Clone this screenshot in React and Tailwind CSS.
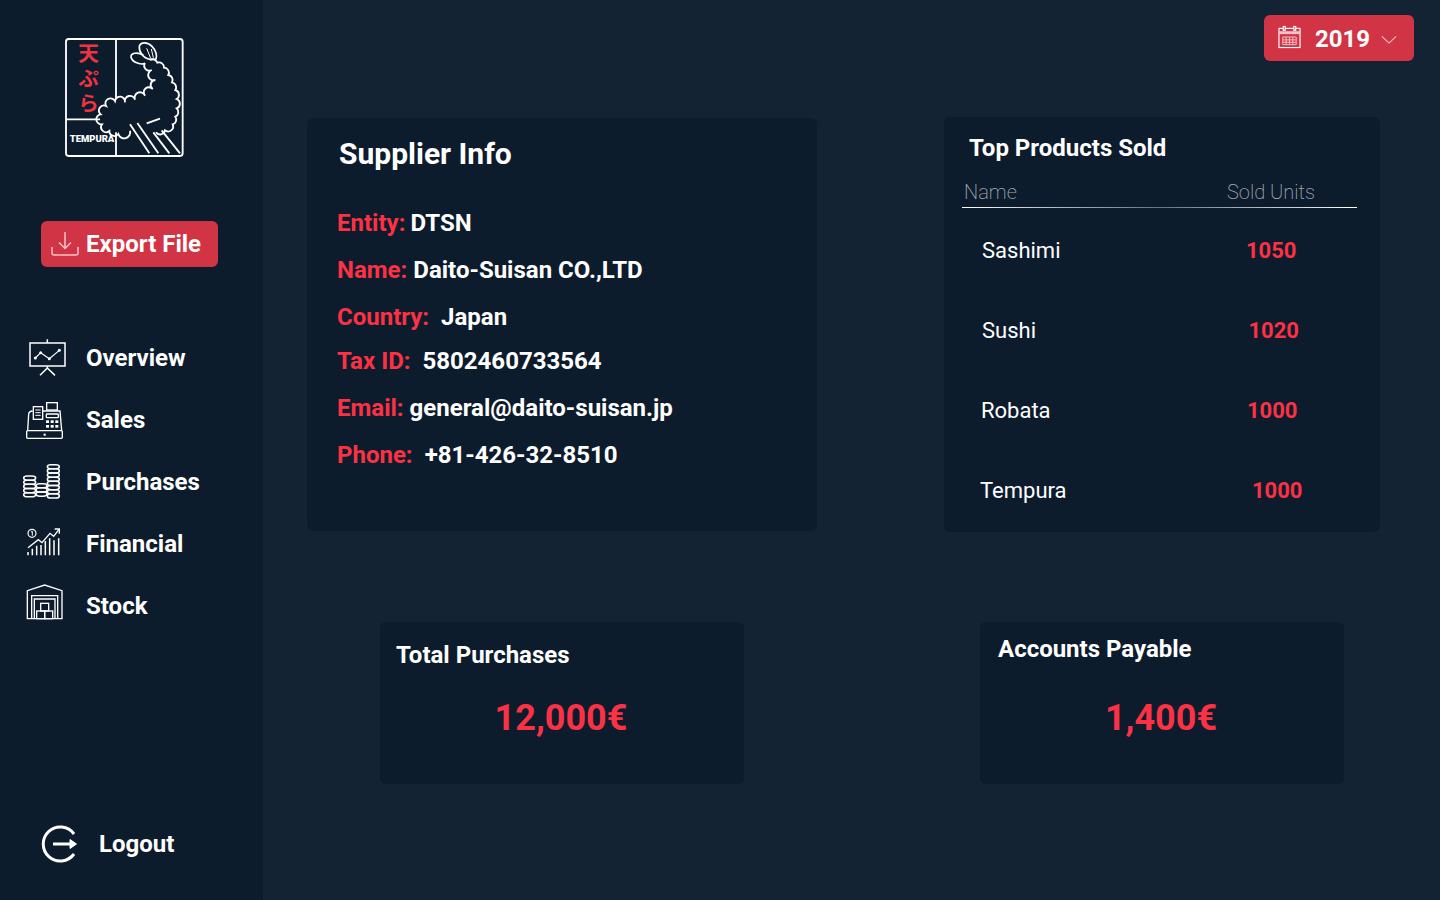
import React from 'react';

const scallop = (pts, r = 15) => {
  let d = `M${pts[0][0]} ${pts[0][1]}`;
  for (let i = 1; i < pts.length; i++) {
    d += ` A${r} ${r} 0 0 1 ${pts[i][0]} ${pts[i][1]}`;
  }
  return d;
};

const shrimpBack = [
  [300, 105], [322, 113], [342, 128], [355, 150], [366, 172], [376, 195], [380, 222],
  [380, 250], [376, 275], [368, 298], [345, 316], [318, 322],
];
const shrimpBelly = [
  [240, 317], [205, 327], [178, 318], [156, 298], [152, 268], [168, 243], [195, 228],
  [225, 232], [255, 224], [285, 212], [308, 192], [316, 165], [305, 135], [285, 114],
];

const Logo = () => (
  <svg viewBox="45 39 360 360" className="w-[120px] h-[120px]" fill="none">
    <rect x="48" y="42" width="350" height="351" rx="8" stroke="#fff" strokeWidth="5.5" />
    <path d="M198 42V222M198 322V393M48 283H150" stroke="#fff" strokeWidth="5.5" />
    <path d={scallop(shrimpBack)} stroke="#fff" strokeWidth="5.5" />
    <path d={scallop(shrimpBelly)} stroke="#fff" strokeWidth="5.5" />
    <path d="M300 103C280 100 266 80 268 64C272 50 292 50 306 64C318 76 322 92 318 102Z" stroke="#fff" strokeWidth="5" strokeLinejoin="round" />
    <path d="M284 116C266 120 246 110 243 96C242 84 262 80 280 90" stroke="#fff" strokeWidth="5" />
    <path d="M290 70L302 100M304 72L310 98" stroke="#fff" strokeWidth="3" />
    <path d="M290 295L330 281M240 298L298 385M262 294L325 385M310 322L358 385M335 316L390 385" stroke="#fff" strokeWidth="5.5" />
    <text
      x="116"
      y="52"
      fontSize="62"
      fontWeight="700"
      letterSpacing="14"
      fill="#ef3340"
      fontFamily="'Noto Sans CJK JP', sans-serif"
      style={{ writingMode: 'vertical-rl' }}
    >
      天ぷら
    </text>
    <text x="59" y="350" fontSize="26" fontWeight="900" fill="#fff" fontFamily="Roboto, sans-serif" textLength="134" lengthAdjust="spacingAndGlyphs">TEMPURA</text>
  </svg>
);

const OverviewIcon = () => (
  <svg viewBox="36 12 144 144" className="w-12 h-12" fill="none" stroke="#fff" strokeWidth="4.5">
    <rect x="60" y="39" width="105" height="69" />
    <path d="M112 28V39M112 108V114M90 136L112 114L135 136" />
    <path d="M76 84L92 68L118 86L148 61" strokeWidth="3.5" />
    <g fill="#fff" stroke="none">
      <circle cx="76" cy="84" r="4.5" />
      <circle cx="92" cy="68" r="4.5" />
      <circle cx="118" cy="86" r="4.5" />
      <circle cx="148" cy="61" r="4.5" />
    </g>
  </svg>
);

const SalesIcon = () => (
  <svg viewBox="36 198 144 144" className="w-12 h-12" fill="none" stroke="#fff" strokeWidth="4">
    <rect x="50" y="302" width="107" height="23" rx="3" />
    <path d="M53 302L56 252Q57 244 68 243M98 243H150L155 302" />
    <rect x="70" y="230" width="28" height="38" />
    <path d="M76 240H92M76 248H92M76 256H92" strokeWidth="3" />
    <rect x="110" y="218" width="32" height="22" />
    <rect x="109" y="252" width="36" height="11" rx="2" />
    <g fill="#fff" stroke="none">
      <rect x="108" y="271" width="9" height="8" />
      <rect x="122" y="271" width="9" height="8" />
      <rect x="136" y="271" width="9" height="8" />
      <rect x="108" y="285" width="9" height="8" />
      <rect x="122" y="285" width="9" height="8" />
      <rect x="136" y="285" width="9" height="8" />
      <circle cx="104" cy="314" r="3.5" />
    </g>
  </svg>
);

const coinRows = (x, w, top, count) =>
  Array.from({ length: count }, (_, i) => (
    <rect key={`${x}-${i}`} x={x} y={top + i * 12.5} width={w} height="12.5" rx="11" ry="6.25" />
  ));

const PurchasesIcon = () => (
  <svg viewBox="36 9 144 144" className="w-12 h-12" fill="none" stroke="#fff" strokeWidth="4.5">
    {coinRows(41, 36, 63, 5)}
    {coinRows(78, 33, 86, 3)}
    {coinRows(112, 36, 29, 8)}
  </svg>
);

const FinancialIcon = () => (
  <svg viewBox="36 195 144 144" className="w-12 h-12" fill="none" stroke="#fff" strokeWidth="4">
    <circle cx="66" cy="235" r="12" strokeWidth="3.5" />
    <path d="M63 231L67 229V242" strokeWidth="3" />
    <path d="M54 278L85 254L96 263L120 235L131 244L147 223" />
    <path d="M134 222H148V236" />
    <path d="M54 301V291M67 301V281M80 301V272M93 301V270M106 301V258M119 301V250M132 301V256M146 301V250" strokeWidth="4.5" />
  </svg>
);

const StockIcon = () => (
  <svg viewBox="36 381 144 144" className="w-12 h-12" fill="none" stroke="#fff" strokeWidth="4">
    <path d="M52 491V407L104 390L156 407V491Z" />
    <path d="M65 491V422H143V491M73 491V432H135V491" />
    <rect x="92" y="445" width="24" height="23" />
    <rect x="80" y="468" width="24" height="23" />
    <rect x="104" y="468" width="24" height="23" />
  </svg>
);

const navItems = [
  { label: 'Overview', icon: <OverviewIcon /> },
  { label: 'Sales', icon: <SalesIcon /> },
  { label: 'Purchases', icon: <PurchasesIcon /> },
  { label: 'Financial', icon: <FinancialIcon /> },
  { label: 'Stock', icon: <StockIcon /> },
];

const products = [
  { name: 'Sashimi', units: '1050', row: 'pl-[38px]', nameCol: 'w-[264px]' },
  { name: 'Sushi', units: '1020', row: 'pl-[38px]', nameCol: 'w-[266.5px]' },
  { name: 'Robata', units: '1000', row: 'pl-[37px]', nameCol: 'w-[266px]' },
  { name: 'Tempura', units: '1000', row: 'pl-[36px]', nameCol: 'w-[272px]' },
];

const supplier = [
  { label: 'Entity:', value: 'DTSN', row: 'mt-[37px]', gap: 'ml-[5px]' },
  { label: 'Name:', value: 'Daito-Suisan CO.,LTD', row: 'mt-[19px]', gap: 'ml-[6px]' },
  { label: 'Country:', value: 'Japan', row: 'mt-[19px]', gap: 'ml-[12px]' },
  { label: 'Tax ID:', value: '5802460733564', row: 'mt-[16px]', gap: 'ml-[12px]' },
  { label: 'Email:', value: 'general@daito-suisan.jp', row: 'mt-[19px]', gap: 'ml-[6px]' },
  { label: 'Phone:', value: '+81-426-32-8510', row: 'mt-[19px]', gap: 'ml-[12px]' },
];

const App = () => {
  return (
    <div className="flex h-[900px] w-[1440px] overflow-hidden bg-[#142333] font-['Roboto',sans-serif] text-white">
      {/* Sidebar */}
      <aside className="flex w-[263px] shrink-0 flex-col bg-[#0d1c2d]">
        <div className="ml-[65px] mt-[38px]">
          <Logo />
        </div>
        <button className="ml-[41px] mt-[63px] flex h-[46px] w-[177px] items-center rounded-[6px] bg-[#d13444] pl-[10px] text-[24px] font-bold">
          <svg viewBox="0 0 28 26" className="h-[26px] w-[28px]" fill="none" stroke="#f6c3c8" strokeWidth="1.5">
            <path d="M14 1V17M8 11.5L14 17.5L20 11.5M1 16V22Q1 24 3 24H25Q27 24 27 22V16" />
          </svg>
          <span className="ml-[7px]">Export File</span>
        </button>
        <nav className="mt-[60px] flex flex-col">
          {navItems.map((item) => (
            <div key={item.label} className="flex h-[62px] items-center pl-[22px] text-[24px] font-bold">
              {item.icon}
              <span className="ml-[16px]">{item.label}</span>
            </div>
          ))}
        </nav>
        <div className="mb-[37px] ml-[39px] mt-auto flex items-center text-[24px] font-bold">
          <svg viewBox="0 0 38 38" className="h-[38px] w-[38px]" fill="none" stroke="#fff" strokeWidth="3">
            <path d="M35 9A17 17 0 1 0 35 29" />
            <path d="M14 19H33" />
            <path d="M31 14.5L37.5 19L31 23.5Z" fill="#fff" strokeWidth="1" />
          </svg>
          <span className="ml-[22px]">Logout</span>
        </div>
      </aside>

      {/* Main */}
      <main className="flex flex-1 flex-col">
        <div className="flex justify-end pr-[26px] pt-[15px]">
          <button className="flex h-[46px] w-[150px] items-center rounded-[6px] bg-[#d13444] pl-[14px] text-[24px] font-bold">
            <svg viewBox="0 0 24 24" className="mb-[2px] h-[24px] w-[23px]" fill="none" stroke="#fff" strokeWidth="1.2">
              <rect x="1" y="3" width="22" height="20" />
              <path d="M1 7.5H23" stroke="#f6c3c8" strokeWidth="3" />
              <rect x="5.5" y="1" width="2" height="4" fill="#d13444" />
              <rect x="16.5" y="1" width="2" height="4" fill="#d13444" />
              <path d="M5 12H19V20H5ZM5 15H19M5 17.5H19M8.5 12V20M12 12V20M15.5 12V20" stroke="#f6c3c8" strokeWidth="1" />
            </svg>
            <span className="ml-[14px] pt-[2px]">2019</span>
            <svg viewBox="0 0 18 10" className="ml-[11px] mt-[3px] h-[9px] w-[16px]" fill="none" stroke="#f6c3c8" strokeWidth="1.3">
              <path d="M1 1.5L9 9L17 1.5" />
            </svg>
          </button>
        </div>

        <div className="ml-[44px] mt-[56px] flex items-start">
          {/* Supplier */}
          <section className="mt-[1px] h-[413px] w-[510px] rounded-[6px] bg-[#0d1c2d] pl-[30px] pt-[18px]">
            <h2 className="ml-[2px] text-[30px] font-bold leading-[36px]">Supplier Info</h2>
            {supplier.map((line) => (
              <div key={line.label} className={`${line.row} flex text-[24px] font-bold leading-[28px]`}>
                <span className="text-[#fb3144]">{line.label}</span>
                <span className={line.gap}>{line.value}</span>
              </div>
            ))}
          </section>

          {/* Top products */}
          <section className="ml-[127px] h-[415px] w-[436px] rounded-[6px] bg-[#0d1c2d] pt-[16px]">
            <h2 className="ml-[25px] text-[24px] font-bold leading-[30px]">Top Products Sold</h2>
            <div className="ml-[20px] mt-[17px] flex text-[20px] font-extralight leading-[24px] text-[#a3a9b0]">
              <span className="w-[263px]">Name</span>
              <span>Sold Units</span>
            </div>
            <div className="ml-[18px] mt-[3px] h-[1px] w-[395px] bg-linear-to-r from-white via-gray-500 to-white" />
            <div className="mt-[2px] flex flex-col">
              {products.map((p) => (
                <div key={p.name} className={`${p.row} flex h-[80px] items-center text-[22px]`}>
                  <span className={`${p.nameCol} font-normal`}>{p.name}</span>
                  <span className="font-bold text-[#fb3144]">{p.units}</span>
                </div>
              ))}
            </div>
          </section>
        </div>

        <div className="ml-[117px] mt-[90px] flex">
          <section className="h-[162px] w-[364px] rounded-[6px] bg-[#0d1c2d] pt-[18px]">
            <h3 className="ml-[16px] text-[24px] font-bold leading-[30px]">Total Purchases</h3>
            <p className="mt-[26px] pr-[2px] text-center text-[36px] font-bold leading-[44px] text-[#fb3144]">12,000€</p>
          </section>
          <section className="ml-[236px] h-[162px] w-[364px] rounded-[6px] bg-[#0d1c2d] pt-[12px]">
            <h3 className="ml-[18px] text-[24px] font-bold leading-[30px]">Accounts Payable</h3>
            <p className="mt-[32px] pr-[2px] text-center text-[36px] font-bold leading-[44px] text-[#fb3144]">1,400€</p>
          </section>
        </div>
      </main>
    </div>
  );
};

export default App;
